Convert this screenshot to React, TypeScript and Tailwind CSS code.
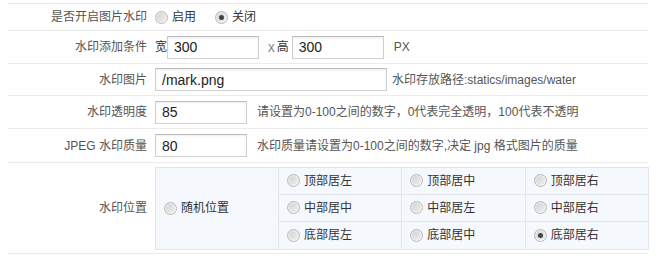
import React, { useState } from 'react';

const font = { fontFamily: '"Liberation Sans", "Noto Sans CJK SC", sans-serif' };

const Radio: React.FC<{ checked?: boolean; onClick?: () => void }> = ({ checked, onClick }) => (
  <span
    onClick={onClick}
    className="inline-flex w-[13px] h-[13px] rounded-full border border-[#b8b8b8] bg-gradient-to-br from-[#cfcfcf] to-[#f2f2f2] items-center justify-center shrink-0 cursor-pointer shadow-[inset_0_0_1px_1px_rgba(255,255,255,0.6)]"
  >
    {checked && <span className="w-[5px] h-[5px] rounded-full bg-[#444]" />}
  </span>
);

const Row: React.FC<{ label: string; className?: string; children: React.ReactNode }> = ({
  label,
  className = 'h-[33px]',
  children,
}) => (
  <div className={`flex items-center border-b border-[#ebebeb] ${className}`}>
    <div className="w-[139px] text-right text-[#555] shrink-0">{label}</div>
    <div className="flex items-center pl-[8px]">{children}</div>
  </div>
);

const inputCls =
  'h-[23px] border border-[#cfcfcf] border-t-[#bdbdbd] px-[6px] text-[14px] text-[#222] bg-white outline-none shadow-[inset_0_1px_2px_rgba(0,0,0,0.08)]';

const positions = [
  ['顶部居左', '顶部居中', '顶部居右'],
  ['中部居中', '中部居左', '中部居右'],
  ['底部居左', '底部居中', '底部居右'],
];

export default function App() {
  const [enabled, setEnabled] = useState(false);
  const [pos, setPos] = useState('2-2');

  return (
    <div className="w-[658px] h-[257px] bg-white pt-[3px] text-[12px]" style={font}>
      <div className="ml-[8px] w-[640px] border-t border-[#ebebeb]">
        {/* 开关 */}
        <Row label="是否开启图片水印" className="h-[27px]">
          <label className="flex items-center gap-[4px] text-[#333]">
            <Radio checked={enabled} onClick={() => setEnabled(true)} />
            启用
          </label>
          <label className="flex items-center gap-[4px] text-[#333] ml-[19px]">
            <Radio checked={!enabled} onClick={() => setEnabled(false)} />
            关闭
          </label>
        </Row>

        {/* 尺寸 */}
        <Row label="水印添加条件">
          <span className="text-[#333] w-[12px]">宽</span>
          <input className={`${inputCls} w-[92px]`} defaultValue="300" />
          <span className="ml-[9px] text-[10px] text-[#666] self-start mt-[5px]">X</span>
          <span className="ml-[2px] text-[#333]">高</span>
          <input className={`${inputCls} w-[92px] ml-[3px]`} defaultValue="300" />
          <span className="ml-[10px] text-[#555]">PX</span>
        </Row>

        {/* 图片 */}
        <Row label="水印图片" className="h-[32px]">
          <input className={`${inputCls} w-[232px]`} defaultValue="/mark.png" />
          <span className="ml-[5px] text-[#555]">水印存放路径:statics/images/water</span>
        </Row>

        {/* 透明度 */}
        <Row label="水印透明度">
          <input className={`${inputCls} w-[92px]`} defaultValue="85" />
          <span className="ml-[10px] text-[#555]">请设置为0-100之间的数字，0代表完全透明，100代表不透明</span>
        </Row>

        {/* 质量 */}
        <Row label="JPEG 水印质量" className="h-[34px]">
          <input className={`${inputCls} w-[92px]`} defaultValue="80" />
          <span className="ml-[10px] text-[#555]">水印质量请设置为0-100之间的数字,决定 jpg 格式图片的质量</span>
        </Row>

        {/* 位置 */}
        <Row label="水印位置" className="h-[91px]">
          <div className="flex w-[494px] h-[83px] border border-[#e2e5ea] bg-[#f5f8fd] text-[#333]">
            <label className="w-[123px] flex items-center gap-[4px] pl-[8px] border-r border-[#e2e5ea]">
              <Radio checked={pos === 'random'} onClick={() => setPos('random')} />
              随机位置
            </label>
            <div className="flex-1 flex flex-col">
              {positions.map((row, r) => (
                <div key={r} className={`flex flex-1 ${r < 2 ? 'border-b border-[#e2e5ea]' : ''}`}>
                  {row.map((name, c) => (
                    <label
                      key={c}
                      className={`flex-1 flex items-center gap-[4px] pl-[8px] ${c < 2 ? 'border-r border-[#e2e5ea]' : ''}`}
                    >
                      <Radio checked={pos === `${r}-${c}`} onClick={() => setPos(`${r}-${c}`)} />
                      {name}
                    </label>
                  ))}
                </div>
              ))}
            </div>
          </div>
        </Row>
      </div>
    </div>
  );
}
